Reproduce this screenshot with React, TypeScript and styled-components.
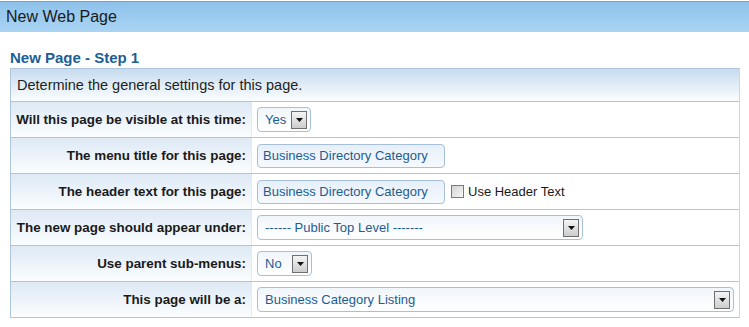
import React, { FC } from 'react'
import styled, { createGlobalStyle } from 'styled-components'

const GlobalStyle = createGlobalStyle`
  html, body {
    margin: 0;
    padding: 0;
    background: #fff;
    font-family: Arial, "Liberation Sans", sans-serif;
  }
`

const DropArrow: FC = () => (
    <ArrowBox>
        <svg width="7" height="4" viewBox="0 0 7 4">
            <path d="M0 0 L7 0 L3.5 4 Z" fill="#111" />
        </svg>
    </ArrowBox>
)

const Select = ({ value, width }: { value: string, width: number }) => (
    <Field $width={width}>
        <span>{value}</span>
        <DropArrow />
    </Field>
)

const App: FC = () => {
    const rows: { label: string, control: React.ReactNode }[] = [
        { label: 'Will this page be visible at this time:', control: <Select value='Yes' width={54} /> },
        { label: 'The menu title for this page:', control: <TextInput $width={188}>Business Directory Category</TextInput> },
        {
            label: 'The header text for this page:',
            control: (
                <>
                    <TextInput $width={188}>Business Directory Category</TextInput>
                    <CheckWrap>
                        <Check />
                        Use Header Text
                    </CheckWrap>
                </>
            )
        },
        { label: 'The new page should appear under:', control: <Select value='------ Public Top Level -------' width={326} /> },
        { label: 'Use parent sub-menus:', control: <Select value='No' width={55} /> },
        { label: 'This page will be a:', control: <Select value='Business Category Listing' width={477} /> },
    ]

    return (
        <>
            <GlobalStyle />
            <TitleBar>New Web Page</TitleBar>
            <Content>
                <StepTitle>New Page - Step 1</StepTitle>
                <Form>
                    <Intro>Determine the general settings for this page.</Intro>
                    {rows.map(row => (
                        <Row key={row.label}>
                            <Label>{row.label}</Label>
                            <Value>{row.control}</Value>
                        </Row>
                    ))}
                </Form>
            </Content>
        </>
    )
}

const TitleBar = styled.div`
margin-top: 1px;
height: 30px;
border-top: 1px solid #7b9fc2;
background: linear-gradient(to bottom, #8ec2eb, #aad4f4);
font-size: 16px;
color: #1a1a1a;
line-height: 30px;
padding-left: 6px;
`

const Content = styled.div`
padding: 0 10px;
`

const StepTitle = styled.div`
font-size: 15px;
font-weight: bold;
color: #1c5f96;
padding-top: 16px;
height: 20px;
line-height: 20px;
`

const Form = styled.div`
width: 728px;
border: 1px solid #afc6da;
border-right-color: #c6d7e6;
border-bottom: none;
`

const Intro = styled.div`
height: 32px;
line-height: 32px;
padding-left: 6px;
font-size: 14.5px;
color: #1e1e1e;
background: linear-gradient(to bottom, #c6dcef, #fbfdfe);
border-bottom: 1px solid #afc6da;
`

const Row = styled.div`
display: flex;
height: 35px;
border-bottom: 1px solid #afc6da;
`

const Label = styled.div`
width: 241px;
box-sizing: border-box;
padding-right: 5px;
display: flex;
align-items: center;
justify-content: flex-end;
font-size: 13.4px;
font-weight: bold;
color: #1a1a1a;
white-space: nowrap;
background: linear-gradient(to bottom, #dde9f5, #fbfdfe);
border-right: 1px solid #e2ebf4;
`

const Value = styled.div`
flex: 1;
display: flex;
align-items: center;
padding-left: 5px;
`

const Field = styled.div<{ $width: number }>`
width: ${p => p.$width}px;
height: 25px;
box-sizing: border-box;
border: 1px solid #a6c0d9;
border-radius: 4px;
background: linear-gradient(to bottom, #f1f6fb, #ffffff);
display: flex;
align-items: center;
justify-content: space-between;
padding: 0 3px 0 7px;
font-size: 13px;
color: #1d5c93;
white-space: nowrap;
`

const TextInput = styled.div<{ $width: number }>`
width: ${p => p.$width}px;
height: 24px;
box-sizing: border-box;
border: 1px solid #a6c0d9;
border-radius: 4px;
background: linear-gradient(to bottom, #e6f0fa, #f6f9fd);
display: flex;
align-items: center;
padding-left: 5px;
font-size: 13px;
color: #1d5c93;
white-space: nowrap;
`

const ArrowBox = styled.div`
width: 16px;
height: 18px;
box-sizing: border-box;
border: 1px solid #6f6f6f;
background: linear-gradient(to bottom, #f4f4f4, #cdcdcd);
display: flex;
align-items: center;
justify-content: center;
`

const CheckWrap = styled.label`
display: flex;
align-items: center;
margin-left: 6px;
font-size: 13px;
color: #1a1a1a;
`

const Check = styled.span`
width: 13px;
height: 13px;
box-sizing: border-box;
border: 1px solid #7a7a7a;
background: linear-gradient(to bottom right, #d2d2d2, #f7f7f7);
margin-right: 4px;
`

export default App
